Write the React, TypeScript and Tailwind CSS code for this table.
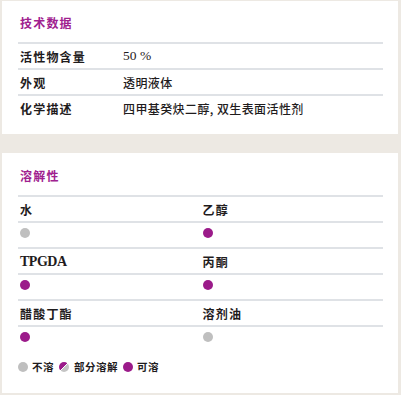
import React from 'react';

const cjk = "font-['Noto_Sans_CJK_SC','Noto_Sans',sans-serif]";
const serif = "font-['Liberation_Serif','Noto_Sans_CJK_SC',serif]";

type Sol = 'none' | 'part' | 'full';

function Dot({ kind, size = 'w-[10px] h-[10px]' }: { kind: Sol; size?: string }) {
  if (kind === 'part') {
    return (
      <span
        className={`${size} rounded-full inline-block shrink-0`}
        style={{ background: 'linear-gradient(135deg, #9b1b8a 0 46%, #ffffff 46% 54%, #c4c4c4 54% 100%)' }}
      />
    );
  }
  return (
    <span
      className={`${size} rounded-full inline-block shrink-0 ${kind === 'full' ? 'bg-[#9b1b8a]' : 'bg-[#bfbfbf]'}`}
    />
  );
}

const specs = [
  { label: '活性物含量', value: '50 %', serifValue: true },
  { label: '外观', value: '透明液体' },
  { label: '化学描述', value: '四甲基癸炔二醇, 双生表面活性剂' },
];

const solvents: { name: string; sol: Sol; latin?: boolean }[][] = [
  [
    { name: '水', sol: 'none' },
    { name: '乙醇', sol: 'full' },
  ],
  [
    { name: 'TPGDA', sol: 'full', latin: true },
    { name: '丙酮', sol: 'full' },
  ],
  [
    { name: '醋酸丁酯', sol: 'full' },
    { name: '溶剂油', sol: 'none' },
  ],
];

export default function App() {
  return (
    <div className={`w-[401px] h-[395px] bg-[#ede9e3] pt-[1px] pl-[2px] pr-[3px] pb-[2px] flex flex-col gap-[19px] ${cjk}`}>
      {/* 技术数据 */}
      <section className="bg-white h-[133px] pt-[13px] pl-[16px] pr-[15px]">
        <h2 className="text-[12px] leading-[18px] font-bold tracking-[1.2px] text-[#a0218f] pl-[2px] mb-[10px]">技术数据</h2>
        <div>
          {specs.map((s) => (
            <div key={s.label} className="flex items-center h-[26px] border-t-2 border-[#dfe2e6] pl-[2px] pt-[1px]">
              <span className="w-[103px] text-[12px] font-bold tracking-[1.2px] text-[#1f1c1d]">{s.label}</span>
              <span
                className={
                  s.serifValue
                    ? `${serif} text-[13.5px] text-[#1f1c1d]`
                    : 'text-[12px] font-medium tracking-[0.4px] text-[#1f1c1d]'
                }
              >
                {s.value}
              </span>
            </div>
          ))}
        </div>
      </section>

      {/* 溶解性 */}
      <section className="bg-white flex-1 pt-[14px] pl-[16px] pr-[15px]">
        <h2 className="text-[12px] leading-[18px] font-bold tracking-[1.2px] text-[#a0218f] pl-[2px] mb-[10px]">溶解性</h2>
        <div>
          {solvents.map((row, i) => (
            <React.Fragment key={i}>
              <div className="grid grid-cols-2 h-[26px] border-t-2 border-[#dfe2e6]">
                {row.map((c) => (
                  <div key={c.name} className="flex items-center pl-[2px] pt-[1px]">
                    <span
                      className={
                        c.latin
                          ? `${serif} text-[14px] font-bold tracking-[-0.5px] text-[#1f1c1d]`
                          : 'text-[12px] font-bold tracking-[1.2px] text-[#1f1c1d]'
                      }
                    >
                      {c.name}
                    </span>
                  </div>
                ))}
              </div>
              <div className="grid grid-cols-2 h-[26px] border-t-2 border-[#dfe2e6]">
                {row.map((c) => (
                  <div key={c.name} className="flex items-center pl-[2px] pb-[4px]">
                    <Dot kind={c.sol} />
                  </div>
                ))}
              </div>
            </React.Fragment>
          ))}
        </div>

        {/* 图例 */}
        <div className="flex items-center mt-[8px] h-[16px] text-[10.5px] font-bold tracking-[0.5px] text-[#1f1c1d]">
          <Dot kind="none" />
          <span className="ml-[4px] mr-[5px]">不溶</span>
          <Dot kind="part" />
          <span className="ml-[5px] mr-[5px]">部分溶解</span>
          <Dot kind="full" />
          <span className="ml-[4px]">可溶</span>
        </div>
      </section>
    </div>
  );
}
